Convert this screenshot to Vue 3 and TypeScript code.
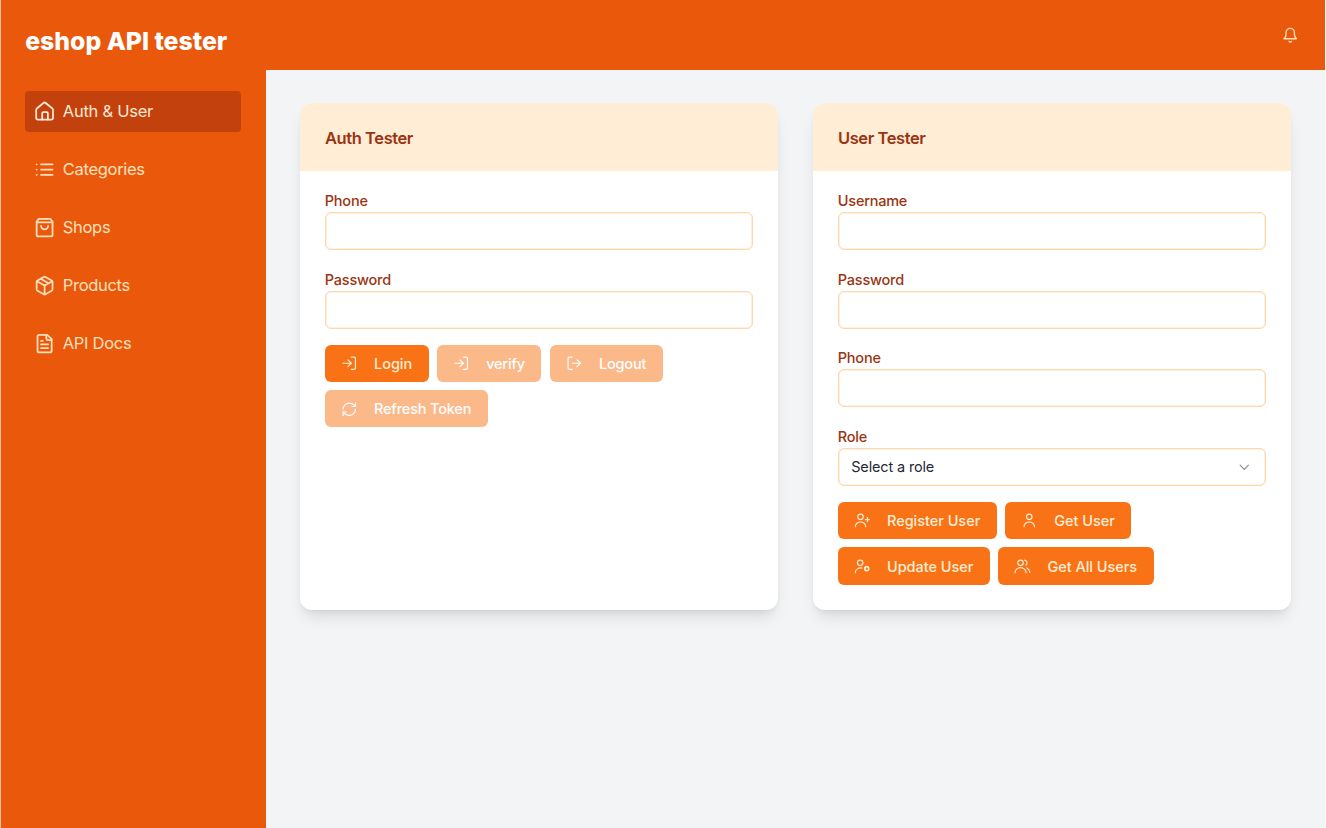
<script setup lang="ts">
import { ref } from 'vue'

interface Circle { cx: number; cy: number; r: number }
interface Icon { paths: string[]; circles?: Circle[] }
interface Action { label: string; icon: string; disabled?: boolean }

const icons: Record<string, Icon> = {
  home: { paths: ['M15.7 21v-7.2a1.2 1.2 0 0 0-1.2-1.2h-4a1.2 1.2 0 0 0-1.2 1.2V21', 'M2.5 10a2 2 0 0 1 .709-1.528l7.5-6.2a2 2 0 0 1 2.582 0l7.5 6.2A2 2 0 0 1 21.5 10v9a2 2 0 0 1-2 2h-15a2 2 0 0 1-2-2z'] },
  list: { paths: ['M8 6h13', 'M8 12h13', 'M8 18h13', 'M3 6h.01', 'M3 12h.01', 'M3 18h.01'] },
  bag: { paths: ['M5.5 2 3 5.5V20a2 2 0 0 0 2 2h14a2 2 0 0 0 2-2V5.5L18.5 2Z', 'M3 6h18', 'M16 10a4 4 0 0 1-8 0'] },
  box: { paths: ['M11 21.73a2 2 0 0 0 2 0l7-4A2 2 0 0 0 21 16V8a2 2 0 0 0-1-1.73l-7-4a2 2 0 0 0-2 0l-7 4A2 2 0 0 0 3 8v8a2 2 0 0 0 1 1.73z', 'M12 22V12', 'M3.3 7 12 12l8.7-5', 'm7.5 4.27 9 5.15'] },
  file: { paths: ['M15 2H6a2 2 0 0 0-2 2v16a2 2 0 0 0 2 2h12a2 2 0 0 0 2-2V7Z', 'M14 2v4a2 2 0 0 0 2 2h4', 'M10 9H8', 'M16 13H8', 'M16 17H8'] },
  bell: { paths: ['M6 8a6 6 0 0 1 12 0c0 7 3 9 3 9H3s3-2 3-9', 'M10.3 21a1.94 1.94 0 0 0 3.4 0'] },
  login: { paths: ['M15 3h4a2 2 0 0 1 2 2v14a2 2 0 0 1-2 2h-4', 'm10 17 5-5-5-5', 'M15 12H3'] },
  logout: { paths: ['M9 21H5a2 2 0 0 1-2-2V5a2 2 0 0 1 2-2h4', 'm16 17 5-5-5-5', 'M21 12H9'] },
  refresh: { paths: ['M3 12a9 9 0 0 1 9-9 9.75 9.75 0 0 1 6.74 2.74L21 8', 'M21 3v5h-5', 'M21 12a9 9 0 0 1-9 9 9.75 9.75 0 0 1-6.74-2.74L3 16', 'M8 16H3v5'] },
  userPlus: { paths: ['M2 21.5v-.5a7.5 6.5 0 0 1 15 0v.5', 'M19.5 8v6', 'M22.5 11h-6'], circles: [{ cx: 9.5, cy: 7, r: 4 }] },
  user: { paths: ['M4.5 21.5v-.5a7.5 6.5 0 0 1 15 0v.5'], circles: [{ cx: 12, cy: 7, r: 4 }] },
  userCog: { paths: ['M2 21.5v-.5a7.5 6.5 0 0 1 9.5-6.3'], circles: [{ cx: 9, cy: 7, r: 4 }, { cx: 18.5, cy: 15.5, r: 3.2 }, { cx: 18.5, cy: 15.5, r: 2.6 }] },
  users: { paths: ['M1.5 21.5v-.5a7.5 6.5 0 0 1 16 0v.5', 'M15.5 3.2a4 4 0 0 1 2 7', 'M18.8 14.5c2.2 1.2 3.7 3.6 4.2 6.5'], circles: [{ cx: 9.5, cy: 7, r: 4 }] },
  chevron: { paths: ['m6 9 6 6 6-6'] },
}

const nav = [
  { label: 'Auth & User', icon: 'home' },
  { label: 'Categories', icon: 'list' },
  { label: 'Shops', icon: 'bag' },
  { label: 'Products', icon: 'box' },
  { label: 'API Docs', icon: 'file' },
]
const active = ref('Auth & User')

const cards: { title: string; fields: string[]; role: boolean; actions: Action[] }[] = [
  {
    title: 'Auth Tester',
    fields: ['Phone', 'Password'],
    role: false,
    actions: [
      { label: 'Login', icon: 'login' },
      { label: 'verify', icon: 'login', disabled: true },
      { label: 'Logout', icon: 'logout', disabled: true },
      { label: 'Refresh Token', icon: 'refresh', disabled: true },
    ],
  },
  {
    title: 'User Tester',
    fields: ['Username', 'Password', 'Phone'],
    role: true,
    actions: [
      { label: 'Register User', icon: 'userPlus' },
      { label: 'Get User', icon: 'user' },
      { label: 'Update User', icon: 'userCog' },
      { label: 'Get All Users', icon: 'users' },
    ],
  },
]
</script>

<template>
  <div class="app">
    <aside class="sidebar">
      <h1 class="brand">eshop API tester</h1>
      <nav class="nav">
        <a v-for="n in nav" :key="n.label" class="link" :class="{ active: n.label === active }" @click="active = n.label">
          <svg class="nav-icon" viewBox="0 0 24 24"><path v-for="p in icons[n.icon].paths" :key="p" :d="p" /></svg>
          <span>{{ n.label }}</span>
        </a>
      </nav>
    </aside>
    <div class="main">
      <header class="topbar">
        <svg class="bell" viewBox="0 0 24 24"><path v-for="p in icons.bell.paths" :key="p" :d="p" /></svg>
      </header>
      <main class="content">
        <section v-for="c in cards" :key="c.title" class="card">
          <h2 class="card-head">{{ c.title }}</h2>
          <div class="card-body">
            <label v-for="f in c.fields" :key="f" class="field">
              <span class="label">{{ f }}</span>
              <input class="input" :type="f === 'Password' ? 'password' : 'text'" />
            </label>
            <div v-if="c.role" class="field">
              <span class="label">Role</span>
              <button class="input select" type="button">
                <span>Select a role</span>
                <svg class="chevron" viewBox="0 0 24 24"><path :d="icons.chevron.paths[0]" /></svg>
              </button>
            </div>
            <div class="actions">
              <button v-for="a in c.actions" :key="a.label" class="btn" :disabled="a.disabled" type="button">
                <svg class="btn-icon" viewBox="0 0 24 24">
                  <circle v-for="(o, i) in icons[a.icon].circles ?? []" :key="i" :cx="o.cx" :cy="o.cy" :r="o.r" />
                  <path v-for="p in icons[a.icon].paths" :key="p" :d="p" />
                </svg>
                <span>{{ a.label }}</span>
              </button>
            </div>
          </div>
        </section>
      </main>
    </div>
  </div>
</template>

<style>
body { margin: 0; background: #f3f4f6; }
</style>

<style scoped>
* { box-sizing: border-box; }
.app {
  display: flex;
  height: 828px;
  overflow: hidden;
  border-left: 1px solid #f6c3a4;
  border-right: 1px solid #fafafa;
  background: #f3f4f6;
  font-family: Inter, "Liberation Sans", sans-serif;
  font-size: 14.5px;
}
svg { fill: none; stroke: currentColor; stroke-width: 2; stroke-linecap: round; stroke-linejoin: round; flex: none; }
.sidebar { width: 264.5px; flex: none; padding: 24.5px 24.2px; background: #ea580c; }
.brand { margin: 0; font-size: 24.8px; line-height: 33px; font-weight: 800; letter-spacing: 0; color: #fff; white-space: nowrap; }
.nav { display: flex; flex-direction: column; gap: 16.6px; margin-top: 33.2px; }
.link {
  display: flex;
  align-items: center;
  gap: 8px;
  height: 41.4px;
  padding: 0 8.4px;
  border-radius: 4px;
  color: #ffe0bd;
  font-size: 16.5px;
  letter-spacing: -.3px;
  cursor: pointer;
}
.link.active { background: #c2410c; color: #ffe8d4; letter-spacing: -.25px; }
.nav-icon { width: 21.2px; height: 21.2px; }
.main { flex: 1; min-width: 0; }
.topbar { height: 70.3px; padding-right: 26.5px; display: flex; align-items: center; justify-content: flex-end; background: #ea580c; color: #ffe0bd; }
.bell { width: 16.5px; height: 16.5px; stroke-width: 2; }
.content { display: grid; grid-template-columns: 1fr 1fr; gap: 35px; padding: 33.2px 34px 0 34.5px; }
.card { height: 506.5px; border-radius: 12px; background: #fff; overflow: hidden; box-shadow: 0 10px 15px -3px rgba(0, 0, 0, .1), 0 4px 6px -4px rgba(0, 0, 0, .1); }
.card-head { margin: 0; height: 67.4px; padding: 1.2px 25px 0; display: flex; align-items: center; font-size: 16.5px; font-weight: 600; letter-spacing: -.42px; color: #9a3412; background: #ffedd5; }
.card-body { padding: 20.1px 24.8px 0; }
.field { display: block; height: 78.65px; }
.label { display: block; height: 21px; line-height: 19px; font-weight: 500; letter-spacing: -.23px; color: #9a3412; }
.input { display: block; width: 100%; height: 38px; padding: 0 12.4px; border: 1px solid #fed7aa; border-radius: 6px; background: #fff; font: inherit; letter-spacing: -.15px; color: #1f2937; outline: none; box-shadow: inset 0 0 0 .6px #fde3c4; }
.select { display: flex; align-items: center; justify-content: space-between; }
.chevron { width: 16.5px; height: 16.5px; color: #8b8b8b; stroke-width: 1.6; }
.actions { display: flex; flex-wrap: wrap; gap: 8.3px; margin-top: -3.7px; }
.btn { display: flex; align-items: center; gap: 16.8px; height: 37.3px; padding: 0 16.5px 0 15.9px; border: 0; border-radius: 6px; background: #f97316; color: #ffedd5; font: inherit; font-weight: 500; letter-spacing: -.03px; white-space: nowrap; }
.btn:disabled { opacity: .5; color: #fff; letter-spacing: -.18px; }
.btn-icon { width: 16.5px; height: 16.5px; stroke-width: 1.7; }
</style>
